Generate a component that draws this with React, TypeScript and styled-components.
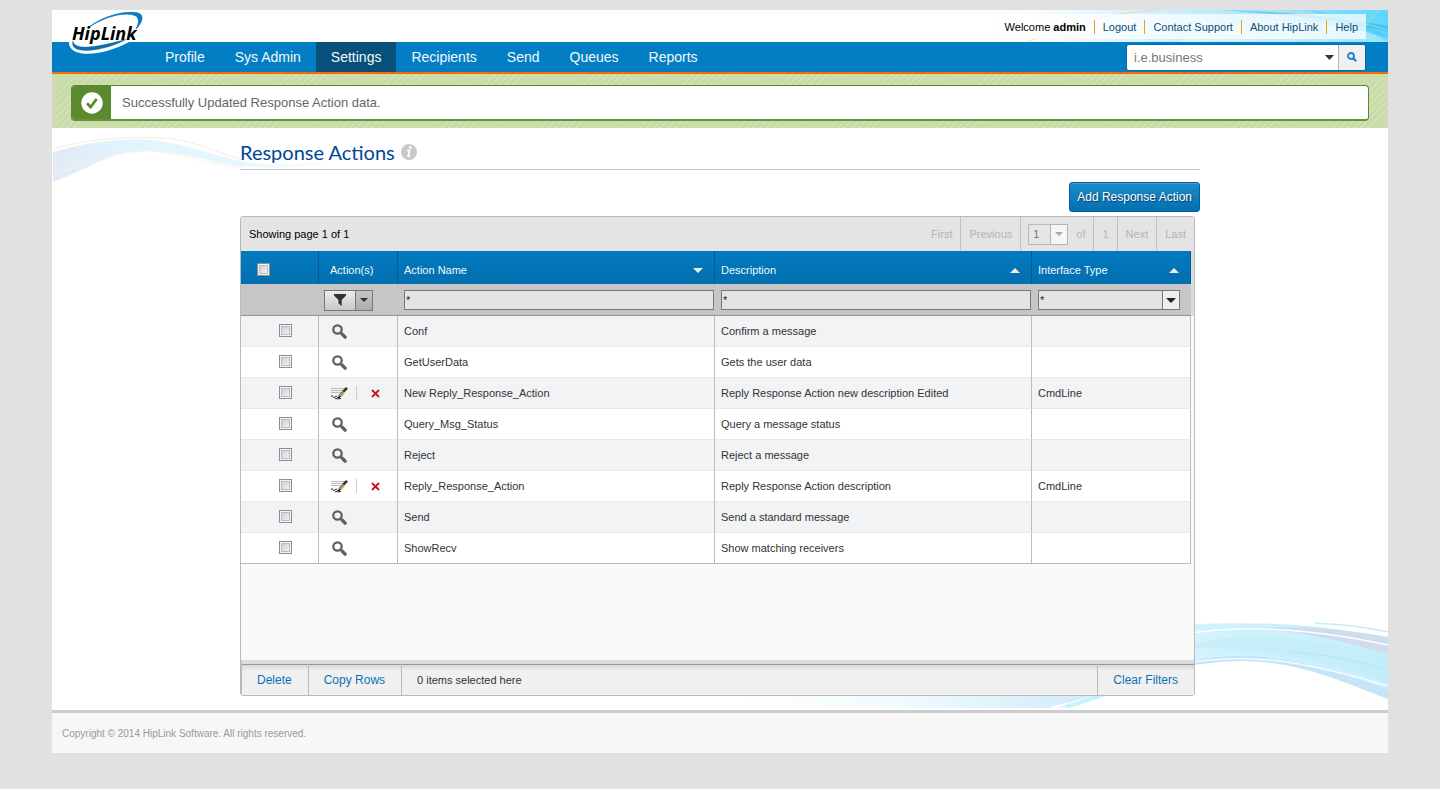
import React from "react";
import styled, { createGlobalStyle, css } from "styled-components";

const GlobalStyle = createGlobalStyle`
  *, *::before, *::after { box-sizing: border-box; }
  body {
    margin: 0;
    background: #e1e1e1;
    color: #333;
    font-family: "Liberation Sans", Arial, sans-serif;
    font-size: 11px;
  }
  button, input, select { font: inherit; margin: 0; }
  a { text-decoration: none; }
`;

const Page = styled.div`
  margin: 10px 52px 36px;
  background: #fff;
`;

/* ---------- header ---------- */

const Header = styled.header`
  position: relative;
`;

const TopBar = styled.div`
  position: relative;
  display: flex;
  justify-content: flex-end;
  height: 32px;
  padding: 4px 22px 3px 0;
`;

const TopWave = styled.svg`
  position: absolute;
  top: 0;
  right: 0;
`;

const UserLinks = styled.ul`
  position: relative;
  display: flex;
  align-items: center;
  margin: 0;
  padding: 0;
  list-style: none;
  background: rgba(255, 255, 255, 0.72);
`;

const UserItem = styled.li`
  padding: 0 8px;
  line-height: 14px;
  color: #000;
  & + & { border-left: 1px solid #f79a0d; }
  a { color: #0f4c75; }
`;

const Logo = styled.svg`
  position: absolute;
  left: 16px;
  top: 0;
`;

const NavBar = styled.nav`
  display: flex;
  align-items: stretch;
  justify-content: space-between;
  height: 32px;
  padding: 0 22px 0 98px;
  background: #027fc4;
  border-bottom: 2px solid #ff6600;
`;

const NavList = styled.ul`
  display: flex;
  margin: 0;
  padding: 0;
  list-style: none;
`;

const NavLink = styled.a<{ $active?: boolean }>`
  display: block;
  padding: 0 15px;
  font-size: 14px;
  line-height: 30px;
  color: #f2f8fc;
  background: ${(p) => (p.$active ? "#07507a" : "transparent")};
`;

const SearchForm = styled.form`
  display: flex;
  align-items: center;
  align-self: center;
  width: 240px;
  height: 27px;
  border: 1px solid #0469a5;
  border-radius: 3px;
  overflow: hidden;
  background: #fff;
`;

const SearchInput = styled.input`
  flex: 1;
  min-width: 0;
  height: 25px;
  padding: 0 7px;
  border: 0;
  background: transparent;
  color: #777;
  font-size: 13px;
  &::placeholder { color: #777; opacity: 1; }
`;

const PlainButton = styled.button`
  display: flex;
  align-items: center;
  justify-content: center;
  padding: 0;
  border: 0;
  background: transparent;
`;

const SearchToggle = styled(PlainButton)`
  width: 18px;
  height: 25px;
`;

const SearchSubmit = styled(PlainButton)`
  width: 27px;
  height: 25px;
  background: #f0f0f0;
  border-left: 1px solid #b5b5b5;
`;

/* ---------- notice ---------- */

const NoticeBand = styled.section`
  padding: 11px 19px 7px;
  background: repeating-linear-gradient(135deg, #c9dba8 0 3px, #d3e2b7 3px 4px, #c9dba8 4px 5px);
`;

const Notice = styled.div`
  display: flex;
  height: 36px;
  background: #fff;
  border: 1px solid #5a8a2d;
  border-bottom: 2px solid #65913b;
  border-radius: 4px;
  overflow: hidden;
`;

const NoticeIcon = styled.span`
  display: flex;
  align-items: center;
  justify-content: center;
  width: 39px;
  background: #5a8a2d;
`;

const NoticeText = styled.p`
  margin: 0;
  padding-left: 11px;
  font-size: 13px;
  line-height: 33px;
  color: #666;
`;

/* ---------- content ---------- */

const Main = styled.main`
  position: relative;
  padding: 12px 0 14px;
`;

const LeftWave = styled.svg`
  position: absolute;
  left: 1px;
  top: 7px;
`;

const RightWave = styled.svg`
  position: absolute;
  right: 0;
  bottom: 2px;
`;

const Content = styled.div`
  position: relative;
  max-width: 960px;
  margin: 0 auto;
`;

const TitleRow = styled.div`
  display: flex;
  align-items: center;
  gap: 6px;
  height: 30px;
  padding-bottom: 6px;
  border-bottom: 1px solid #c6c6c6;
`;

const Title = styled.h1`
  margin: 0;
  font-family: Lato, sans-serif;
  font-size: 20px;
  font-weight: 400;
  line-height: 26px;
  color: #004696;
`;

const ActionBar = styled.div`
  display: flex;
  justify-content: flex-end;
  padding: 12px 0 4px;
`;

const PrimaryButton = styled.button`
  height: 30px;
  padding: 0 7px;
  font-size: 12px;
  color: #fff;
  text-shadow: 1px 1px 1px rgba(0, 0, 0, 0.5);
  border: 1px solid #075d95;
  border-radius: 3px;
  background: linear-gradient(#1c8acb, #026fb0);
  box-shadow: inset 0 1px 0 #3f9fd6;
`;

const Grid = styled.section`
  margin-right: 5px;
  border: 1px solid #b9b9b9;
  border-radius: 3px;
  overflow: hidden;
  background: #f9f9f9;
`;

const GridTop = styled.div`
  display: flex;
  justify-content: space-between;
  height: 34px;
  line-height: 34px;
  background: #e4e4e4;
  color: #000;
`;

const PageInfo = styled.span`
  padding-left: 8px;
`;

const Pager = styled.div`
  display: flex;
`;

const PagerCell = styled.span`
  display: flex;
  align-items: center;
  gap: 8px;
  padding: 0 8px;
  color: #b4b4b4;
  & + & { border-left: 1px solid #c1c1c1; }
  &:nth-child(3) { padding-left: 7px; }
`;

const PagerButton = styled(PlainButton)`
  color: #b4b4b4;
`;

const PagerSelectBox = styled.span`
  position: relative;
  display: block;
  width: 40px;
  height: 21px;
`;

const PagerSelect = styled.select`
  appearance: none;
  display: block;
  width: 40px;
  height: 21px;
  padding: 0 4px;
  border: 1px solid #b9b9b9;
  border-radius: 0;
  background: #e6e6e6;
  color: #6b6b80;
  line-height: 18px;
`;

const SelectArrow = styled.span<{ $muted?: boolean }>`
  position: absolute;
  top: 0;
  right: 0;
  bottom: 0;
  display: flex;
  align-items: center;
  justify-content: center;
  width: 18px;
  pointer-events: none;
  border: 1px solid ${(p) => (p.$muted ? "#b0b6b6" : "#777")};
  background: ${(p) => (p.$muted ? "#f6f6f6" : "#eee")};
`;

const GridBody = styled.div`
  min-height: 409px;
  padding-right: 3px;
  background: linear-gradient(#dcdcdc 65px, #f9f9f9 65px);
`;

const Table = styled.table`
  width: 100%;
  table-layout: fixed;
  border-collapse: separate;
  border-spacing: 0;
`;

const HeadCell = styled.th<{ $inset?: number }>`
  height: 33px;
  padding: 5px 11px 0 ${(p) => p.$inset ?? 6}px;
  text-align: left;
  font-weight: 400;
  color: #f2f8fc;
  background: linear-gradient(#027abf, #026fb0);
  border-right: 1px solid #045a90;
`;

const SortButton = styled(PlainButton)`
  width: 100%;
  justify-content: space-between;
  color: inherit;
`;

const FilterCell = styled.td`
  height: 32px;
  padding: 1px 1px 0 6px;
  background: #c6c6c6;
  border-bottom: 1px solid #929292;
  vertical-align: middle;
  &:last-child { padding-right: 11px; }
`;

const fieldStyle = css`
  display: block;
  width: 100%;
  height: 20px;
  padding: 0 1px;
  border: 1px solid #777;
  border-radius: 0;
  background: #e4e4e4;
  color: #123;
`;

const FilterInput = styled.input`
  ${fieldStyle}
`;

const FilterSelectBox = styled.div`
  position: relative;
`;

const FilterSelect = styled.select`
  ${fieldStyle}
  appearance: none;
`;

const FilterButtons = styled.div`
  display: flex;
  width: 49px;
  height: 21px;
  margin-left: -1px;
  border: 1px solid #777;
`;

const FunnelButton = styled(PlainButton)`
  flex: 1;
  background: linear-gradient(#ececec, #c9c9c9);
`;

const FunnelMenuButton = styled(PlainButton)`
  width: 17px;
  border-left: 1px solid #777;
  background: linear-gradient(#c4c4c4, #adadad);
`;

const Cell = styled.td<{ $center?: boolean }>`
  height: 31px;
  padding: 0 6px;
  padding-left: ${(p) => (p.$center ? 17 : 6)}px;
  text-align: ${(p) => (p.$center ? "center" : "left")};
  color: #333;
  border-right: 1px solid #bbb;
  border-bottom: 1px solid #e6e8ea;
`;

const Row = styled.tr`
  background: #fff;
  &:nth-child(odd) { background: #f2f3f5; }
  &:last-child td { border-bottom-color: #bbb; }
`;

const Check = styled.input`
  appearance: none;
  display: inline-block;
  vertical-align: middle;
  width: 13px;
  height: 13px;
  margin-bottom: 2px;
  border: 1px solid #8b8f8f;
  background: linear-gradient(135deg, #c3c8d0, #fafafa) padding-box;
  box-shadow: inset 0 0 0 1px #f4f4f4, inset 0 0 0 2px #b9bcc0;
`;

const RowActions = styled.div`
  display: flex;
  align-items: center;
  padding-left: 6px;
`;

const IconButton = styled(PlainButton)`
  width: 17px;
  height: 17px;
`;

const DeleteButton = styled(IconButton)`
  margin-left: 10px;
`;

const ActionDivider = styled.span`
  width: 1px;
  height: 14px;
  margin-left: 8px;
  background: #ccc;
`;

const GridFoot = styled.div`
  display: flex;
  height: 35px;
  border-top: 4px solid #dcdcdc;
  border-left: 1px solid #b9b9b9;
  background: linear-gradient(#989898 1px, #d9d9d9 1px, #f0f0f0 7px);
`;

const FootButton = styled(PlainButton)<{ $end?: boolean }>`
  padding: 0 16px 0 15px;
  font-size: 12px;
  color: #0b72b5;
  border: 0 solid #bbb;
  border-width: ${(p) => (p.$end ? "0 0 0 1px" : "0 1px 0 0")};
`;

const FootText = styled.span`
  flex: 1;
  padding-left: 15px;
  line-height: 32px;
  color: #333;
`;

const PageFoot = styled.footer`
  padding: 2px 10px 0;
  border-top: 3px solid #ccc;
  background: #f7f7f7;
  font-size: 10px;
  line-height: 38px;
  color: #999;
`;

/* ---------- drawings ---------- */

const Triangle = ({ up, color, w = 10, h = 5 }: { up?: boolean; color: string; w?: number; h?: number }) => (
  <svg width={w} height={h} aria-hidden="true">
    <polygon fill={color} points={up ? `0,${h} ${w / 2},0 ${w},${h}` : `0,0 ${w},0 ${w / 2},${h}`} />
  </svg>
);

const MagnifierIcon = () => (
  <svg width="15" height="15" viewBox="0 0 15 15" fill="none" stroke="#606060" aria-hidden="true">
    <circle cx="5.5" cy="5.5" r="4.2" strokeWidth="2.3" />
    <path d="M8.6 8.6l1.6 1.6" strokeWidth="2" />
    <path d="M10.3 10.3l2.8 2.8" strokeWidth="3.4" strokeLinecap="round" />
  </svg>
);

const SearchIcon = () => (
  <svg width="10" height="10" viewBox="0 0 10 10" fill="none" stroke="#1783c9" aria-hidden="true">
    <circle cx="4" cy="4" r="3" strokeWidth="1.8" />
    <path d="M6.2 6.2l3 3" strokeWidth="2.2" />
  </svg>
);

const EditIcon = () => (
  <svg width="17" height="15" viewBox="0 0 17 15" fill="none" aria-hidden="true">
    <path d="M0 2.5h14M0 4.5h13M0 6.5h11" stroke="#bbb" />
    <path d="M0 10.5q1.5-2 2 0t2 .5 1.5-.8 1.5 1.5 3 .8" stroke="#333" />
    <path d="M4 12.7h5" stroke="#333" strokeWidth="1" />
    <path d="M12.3 5.7L16 1.8" stroke="#333" strokeWidth="2.6" />
    <path d="M9.2 10l3.6-4" stroke="#c99a50" strokeWidth="2.8" />
    <path d="M12 5l-4.5 5" stroke="#444" strokeWidth="0.8" />
    <path d="M7.5 12l1.7-2" stroke="#222" strokeWidth="1.8" />
  </svg>
);

const CrossIcon = () => (
  <svg width="9" height="9" viewBox="0 0 9 9" fill="none" stroke="#c4161c" strokeWidth="1.8" aria-hidden="true">
    <path d="M1 1l7 7M8 1L1 8" />
  </svg>
);

const FunnelIcon = () => (
  <svg width="12" height="12" viewBox="0 0 12 12" fill="#333" aria-hidden="true">
    <path d="M0 0h12v1.5L7.700 6v6L4.500 9.500V6L0 1.500z" />
  </svg>
);

const CheckCircle = () => (
  <svg width="22" height="22" viewBox="0 0 22 22" aria-hidden="true">
    <circle cx="11" cy="11" r="10.7" fill="#fff" />
    <path d="M6 11.3l3.6 3.7 6-8" fill="none" stroke="#5a8a2d" strokeWidth="2.8" />
  </svg>
);

const InfoIcon = () => (
  <svg width="16" height="16" viewBox="0 0 16 16" aria-hidden="true">
    <circle cx="8" cy="8" r="8" fill="#c9c9c9" />
    <circle cx="9.3" cy="3.6" r="1.4" fill="#fff" />
    <path d="M5.8 6.5h2.8L7.3 12.2h2" fill="none" stroke="#fff" strokeWidth="1.7" />
  </svg>
);

const HipLinkLogo = () => (
  <Logo width="80" height="46" viewBox="0 0 80 46" role="img" aria-label="HipLink">
    <path d="M1 33C1 30 3 27 6 24L72 12C76 20 68 29 59 33 46 40 28 45 14 43.5 5 42 1 38 1 33z" fill="#fff" />
    <path
      d="M21 17C35 6 58 0 70 3 77 5 74 13 68 19 71 13 72 8 67 5.5 57 1.5 38 6 21 17z"
      fill="#0b78bf" stroke="#0b78bf" strokeWidth="0.8"
    />
    <path
      d="M5 31C5.5 35.5 11 37.5 20 37 34 36 47 32 58 29.5 48 35 34 39.5 20 40.5 8 41 3 37 5 31z"
      fill="#0b6db0" stroke="#0b6db0" strokeWidth="0.4"
    />
    <text x="4" y="30" fontFamily="'Open Sans', sans-serif" fontSize="18" fontWeight="700" fontStyle="italic" fill="#000">
      HipLink
    </text>
  </Logo>
);

const HeaderWave = () => (
  <TopWave width="420" height="32" viewBox="0 0 420 32" aria-hidden="true">
    <defs>
      <linearGradient id="sky">
        <stop offset="0" stopColor="#fff" stopOpacity="0" />
        <stop offset="0.35" stopColor="#dff5fd" />
        <stop offset="0.75" stopColor="#9fe3fc" />
        <stop offset="1" stopColor="#5cd6fd" />
      </linearGradient>
    </defs>
    <rect width="420" height="32" fill="url(#sky)" />
    <path d="M210 32C270 8 330 2 420 28V32z" fill="#fff" opacity="0.35" />
    <path d="M250 0C310 1 370 6 420 16V22C370 9 300 3 250 0z" fill="#2fb4ec" opacity="0.55" />
    <path d="M340 0C370 4 400 14 420 26V32C400 20 370 8 340 0z" fill="#36bdf0" opacity="0.35" />
    <path d="M60 32C110 10 140 4 190 0" fill="none" stroke="#f7c9a0" strokeWidth="1" opacity="0.7" />
    <path d="M386 32l24-32M300 0q70 4 120 20" fill="none" stroke="#d7d9a8" strokeWidth="1" opacity="0.6" />
  </TopWave>
);

const SideWave = () => (
  <LeftWave width="300" height="50" viewBox="0 0 300 50" aria-hidden="true">
    <defs>
      <linearGradient id="left">
        <stop offset="0" stopColor="#e3e9f5" />
        <stop offset="0.25" stopColor="#e0f4fd" />
        <stop offset="0.65" stopColor="#e8f7fd" />
        <stop offset="1" stopColor="#fff" />
      </linearGradient>
    </defs>
    <path
      d="M0 17C40 6 80 0 118 8 150 14 180 28 212 29 240 30 265 28 290 26 250 34 200 35 165 28 130 18 100 12 68 19 45 25 25 38 0 47z"
      fill="url(#left)"
    />
    <path d="M0 14C40 2 85 1 120 4 150 9 170 20 190 25" fill="none" stroke="#fbeadd" />
    <path d="M0 41C40 26 60 16 96 16 125 16 150 30 190 33" fill="none" stroke="#fbf1ec" />
    <path d="M0 36C30 28 60 12 96 12" fill="none" stroke="#eef0fa" />
  </LeftWave>
);

const CornerWave = () => (
  <RightWave width="688" height="86" viewBox="0 0 688 86" aria-hidden="true">
    <defs>
      <linearGradient id="band" x1="0" x2="1">
        <stop offset="0" stopColor="#e3f7fd" />
        <stop offset="0.5" stopColor="#cdf1fc" />
        <stop offset="1" stopColor="#c9f0fc" />
      </linearGradient>
      <linearGradient id="tail">
        <stop offset="0" stopColor="#fff" />
        <stop offset="0.45" stopColor="#f2fbff" />
        <stop offset="1" stopColor="#cdeaf7" />
      </linearGradient>
    </defs>
    <path d="M30 74H405C380 84 360 86 340 86H60z" fill="url(#tail)" />
    <path d="M352 85C375 81 388 76 400 72" stroke="#fff" strokeWidth="2" fill="none" />
    <path d="M365 85C385 80 392 76 402 72" stroke="#c8f1fc" strokeWidth="4" fill="none" />
    <path
      d="M400 60C430 20 470 4 495 2 550 0 590 2 620 5L688 15V77C650 60 600 40 545 39 520 39 508 41 495 43 460 50 430 64 400 74z"
      fill="url(#band)"
    />
    <path d="M560 7C600 2 650 8 688 15V33C650 20 600 9 560 7z" fill="#cfdcee" />
    <path d="M480 27C540 4 600 18 688 30V62C620 36 560 24 480 27z" fill="#bfe9f8" opacity="0.45" />
    <path d="M480 42C540 26 600 34 688 68V77C620 50 590 40 545 39 520 39 500 42 480 45z" fill="#c6e4f6" />
    <path d="M480 13C540 2 610 6 688 23" stroke="#fff" strokeWidth="1.5" fill="none" />
    <path d="M480 42C550 30 600 38 688 64" stroke="#f3fcff" strokeWidth="1.5" fill="none" />
    <path d="M590 30C630 32 660 40 688 48" stroke="#b4e6f6" fill="none" />
    <path d="M615 1C640 2 665 5 688 10" stroke="#c8edf8" strokeWidth="1.5" fill="none" />
  </RightWave>
);

/* ---------- data ---------- */

const navItems = ["Profile", "Sys Admin", "Settings", "Recipients", "Send", "Queues", "Reports"];
const userLinks = ["Logout", "Contact Support", "About HipLink", "Help"];

const rows: { name: string; description: string; type?: string }[] = [
  { name: "Conf", description: "Confirm a message" },
  { name: "GetUserData", description: "Gets the user data" },
  { name: "New Reply_Response_Action", description: "Reply Response Action new description Edited", type: "CmdLine" },
  { name: "Query_Msg_Status", description: "Query a message status" },
  { name: "Reject", description: "Reject a message" },
  { name: "Reply_Response_Action", description: "Reply Response Action description", type: "CmdLine" },
  { name: "Send", description: "Send a standard message" },
  { name: "ShowRecv", description: "Show matching receivers" },
];

const SortHead = ({ label, up }: { label: string; up?: boolean }) => (
  <HeadCell scope="col">
    <SortButton type="button">
      {label}
      <Triangle up={up} color="#f6eed6" />
    </SortButton>
  </HeadCell>
);

export default function App() {
  return (
    <>
      <GlobalStyle />
      <Page>
        <Header>
          <TopBar>
            <HeaderWave />
            <UserLinks>
              <UserItem>Welcome <b>admin</b></UserItem>
              {userLinks.map((label) => (
                <UserItem key={label}><a href="#">{label}</a></UserItem>
              ))}
            </UserLinks>
          </TopBar>
          <NavBar>
            <NavList>
              {navItems.map((label) => (
                <li key={label}>
                  <NavLink href="#" $active={label === "Settings"}>{label}</NavLink>
                </li>
              ))}
            </NavList>
            <SearchForm>
              <SearchInput type="text" placeholder="i.e.business" aria-label="Search" />
              <SearchToggle type="button" aria-label="Search options">
                <Triangle color="#333" w={9} h={5} />
              </SearchToggle>
              <SearchSubmit type="submit" aria-label="Run search">
                <SearchIcon />
              </SearchSubmit>
            </SearchForm>
          </NavBar>
          <HipLinkLogo />
        </Header>

        <NoticeBand>
          <Notice role="status">
            <NoticeIcon><CheckCircle /></NoticeIcon>
            <NoticeText>Successfully Updated Response Action data.</NoticeText>
          </Notice>
        </NoticeBand>

        <Main>
          <SideWave />
          <CornerWave />
          <Content>
            <TitleRow>
              <Title>Response Actions</Title>
              <InfoIcon />
            </TitleRow>
            <ActionBar>
              <PrimaryButton type="button">Add Response Action</PrimaryButton>
            </ActionBar>

            <Grid>
              <GridTop>
                <PageInfo>Showing page 1 of 1</PageInfo>
                <Pager>
                  <PagerCell><PagerButton type="button">First</PagerButton></PagerCell>
                  <PagerCell><PagerButton type="button">Previous</PagerButton></PagerCell>
                  <PagerCell>
                    <PagerSelectBox>
                      <PagerSelect aria-label="Page"><option>1</option></PagerSelect>
                      <SelectArrow $muted><Triangle color="#aaa" w={8} h={4} /></SelectArrow>
                    </PagerSelectBox>
                    of
                  </PagerCell>
                  <PagerCell>1</PagerCell>
                  <PagerCell><PagerButton type="button">Next</PagerButton></PagerCell>
                  <PagerCell><PagerButton type="button">Last</PagerButton></PagerCell>
                </Pager>
              </GridTop>

              <GridBody>
                <Table>
                  <colgroup>
                    <col width="78" />
                    <col width="79" />
                    <col />
                    <col />
                    <col width="159" />
                  </colgroup>
                  <thead>
                    <tr>
                      <HeadCell scope="col" $inset={16}>
                        <Check type="checkbox" aria-label="Select all rows" />
                      </HeadCell>
                      <HeadCell scope="col" $inset={11}>Action(s)</HeadCell>
                      <SortHead label="Action Name" />
                      <SortHead label="Description" up />
                      <SortHead label="Interface Type" up />
                    </tr>
                    <tr>
                      <FilterCell />
                      <FilterCell>
                        <FilterButtons>
                          <FunnelButton type="button" aria-label="Filter"><FunnelIcon /></FunnelButton>
                          <FunnelMenuButton type="button" aria-label="Filter options">
                            <Triangle color="#333" w={8} h={4} />
                          </FunnelMenuButton>
                        </FilterButtons>
                      </FilterCell>
                      <FilterCell><FilterInput aria-label="Filter by action name" defaultValue="*" /></FilterCell>
                      <FilterCell><FilterInput aria-label="Filter by description" defaultValue="*" /></FilterCell>
                      <FilterCell>
                        <FilterSelectBox>
                          <FilterSelect aria-label="Filter by interface type"><option>*</option></FilterSelect>
                          <SelectArrow><Triangle color="#222" /></SelectArrow>
                        </FilterSelectBox>
                      </FilterCell>
                    </tr>
                  </thead>
                  <tbody>
                    {rows.map((row) => (
                      <Row key={row.name}>
                        <Cell $center>
                          <Check type="checkbox" aria-label={`Select ${row.name}`} />
                        </Cell>
                        <Cell>
                          <RowActions>
                            {row.type ? (
                              <>
                                <IconButton type="button" aria-label={`Edit ${row.name}`}><EditIcon /></IconButton>
                                <ActionDivider />
                                <DeleteButton type="button" aria-label={`Delete ${row.name}`}><CrossIcon /></DeleteButton>
                              </>
                            ) : (
                              <IconButton type="button" aria-label={`View ${row.name}`}><MagnifierIcon /></IconButton>
                            )}
                          </RowActions>
                        </Cell>
                        <Cell>{row.name}</Cell>
                        <Cell>{row.description}</Cell>
                        <Cell>{row.type}</Cell>
                      </Row>
                    ))}
                  </tbody>
                </Table>
              </GridBody>

              <GridFoot>
                <FootButton type="button">Delete</FootButton>
                <FootButton type="button">Copy Rows</FootButton>
                <FootText>0 items selected here</FootText>
                <FootButton type="button" $end>Clear Filters</FootButton>
              </GridFoot>
            </Grid>
          </Content>
        </Main>

        <PageFoot>Copyright © 2014 HipLink Software. All rights reserved.</PageFoot>
      </Page>
    </>
  );
}
